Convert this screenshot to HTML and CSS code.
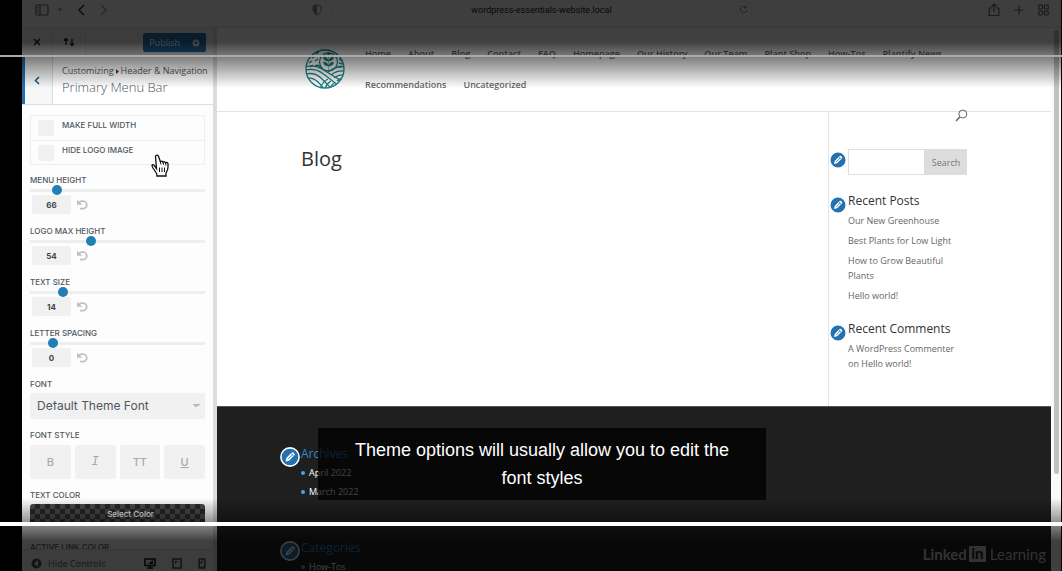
FILE: index.html
```html
<!DOCTYPE html>
<html lang="en">
<head>
<meta charset="utf-8">
<title>Primary Menu Bar</title>
<link rel="stylesheet" href="styles.css">
</head>
<body>
<svg class="defs" aria-hidden="true">
  <symbol id="pencil" viewBox="0 0 18 18"><circle cx="9" cy="9" r="8.2" fill="#2271b1" stroke="#fff" stroke-width="1.4"/><path d="M5 13l.7-3.1 4.9-4.9q.7-.6 1.4 0l1 1q.6.7 0 1.4l-4.900 4.900z" fill="#fff"/><path d="M7.2 11l4-4M10 5.8l2.2 2.2" stroke="#2271b1" stroke-width=".8"/></symbol>
  <symbol id="undo" viewBox="0 0 12 12"><path d="M3 3.400Q5 1.800 7.200 2.200A3.700 3.700 0 0 1 6.800 9.600H4" fill="none" stroke="#c0c0c0" stroke-width="1.800"/><path d="M1 .8v5h5.400z" fill="#c0c0c0"/></symbol>
</svg>
<div class="stage">
  <header class="toolbar">
    <div class="tools">
      <svg width="14" height="12" viewBox="0 0 14 12"><rect x="1" y="1" width="12" height="10" rx="1.5" class="ln"/><path d="M5 1v10M2.4 3.5h1.2M2.4 5.5h1.2M2.4 7.5h1.2" class="ln"/></svg>
      <svg class="caret" width="6" height="4" viewBox="0 0 6 4"><path d="M1 .5h4L3 3.5z" fill="#888"/></svg>
      <svg class="prev" width="8" height="12" viewBox="0 0 8 12"><path d="M7 1L2 6l5 5" class="ln dark"/></svg>
      <svg class="next" width="8" height="12" viewBox="0 0 8 12"><path d="M1 1l5 5-5 5" class="ln pale"/></svg>
      <svg class="shield" width="10" height="12" viewBox="0 0 10 12"><path d="M5 .8L9 2v4.500q-1 3.500-4 4.700-3-1.200-4-4.700V2z" fill="none" stroke="#888"/><path d="M5 .8v10.400q-3-1.200-4-4.700V2z" fill="#888"/></svg>
    </div>
    <div class="url"><span>wordpress-essentials-website.local</span>
      <svg width="9" height="9" viewBox="0 0 9 9"><path d="M7 2.500A3.200 3.200 0 1 0 7.700 5M7.200.5v2.300H5" fill="none" stroke="#888"/></svg></div>
    <div class="tools end">
      <svg width="12" height="14" viewBox="0 0 12 14"><path d="M4 5H1.200v7.500h9.600V5H8M6 9V1M3.500 3.500L6 1l2.500 2.500" class="ln"/></svg>
      <svg width="10" height="10" viewBox="0 0 10 10"><path d="M5 .5v9M.5 5h9" class="ln"/></svg>
      <svg width="11" height="12" viewBox="0 0 11 12"><g class="ln"><rect x=".8" y="1" width="3.700" height="4" rx=".8"/><rect x="6.500" y="1" width="3.700" height="4" rx=".8"/><rect x=".8" y="7" width="3.700" height="4" rx=".8"/><rect x="6.500" y="7" width="3.700" height="4" rx=".8"/></g></svg>
    </div>
  </header>

  <div class="window">
    <aside class="customizer">
      <div class="actions">
        <button class="cell" aria-label="Close"><svg width="8" height="8" viewBox="0 0 8 8"><path d="M1 1l6 6M7 1L1 7" stroke="#222" stroke-width="1.600"/></svg></button>
        <button class="cell" aria-label="Reorder"><svg width="12" height="10" viewBox="0 0 12 10"><path d="M3 8V1.500M1 3.500l2-2 2 2M9 2v6.500M7 6.500l2 2 2-2" fill="none" stroke="#222" stroke-width="1.400"/></svg></button>
        <div class="publish"><button>Publish</button><button class="gear" aria-label="Settings"><svg width="8" height="8" viewBox="0 0 8 8"><circle cx="4" cy="4" r="2.200" fill="none" stroke="#fff" stroke-width="1.500"/><path d="M4 0v1.500M4 6.500V8M0 4h1.500M6.500 4H8M1.200 1.200l1 1M5.800 5.800l1 1M6.800 1.200l-1 1M1.200 6.800l1-1" stroke="#fff"/></svg></button></div>
      </div>
      <div class="title">
        <button class="back" aria-label="Back"><svg width="6" height="9" viewBox="0 0 6 9"><path d="M5 1L1.500 4.500 5 8" fill="none" stroke="#0b5a8c" stroke-width="1.500"/></svg></button>
        <div class="heading"><p><span>Customizing</span><svg width="3" height="5" viewBox="0 0 3 5"><path d="M0 0l3 2.500L0 5z" fill="#444"/></svg><span>Header &amp; Navigation</span></p><h1>Primary Menu Bar</h1></div>
      </div>
      <div class="panel">
        <div class="options">
          <label><input type="checkbox">MAKE FULL WIDTH</label>
          <label><input type="checkbox">HIDE LOGO IMAGE</label>
        </div>
        <div class="field"><label for="mh">MENU HEIGHT</label><input id="mh" type="range" min="0" max="165" value="22"><div class="value"><input type="text" value="66" aria-label="Menu height value"><button aria-label="Reset"><svg width="12" height="12"><use href="#undo"/></svg></button></div></div>
        <div class="field"><label for="lh">LOGO MAX HEIGHT</label><input id="lh" type="range" min="0" max="165" value="56"><div class="value"><input type="text" value="54" aria-label="Logo max height value"><button aria-label="Reset"><svg width="12" height="12"><use href="#undo"/></svg></button></div></div>
        <div class="field"><label for="ts">TEXT SIZE</label><input id="ts" type="range" min="0" max="165" value="28"><div class="value"><input type="text" value="14" aria-label="Text size value"><button aria-label="Reset"><svg width="12" height="12"><use href="#undo"/></svg></button></div></div>
        <div class="field"><label for="ls">LETTER SPACING</label><input id="ls" type="range" min="0" max="165" value="18"><div class="value"><input type="text" value="0" aria-label="Letter spacing value"><button aria-label="Reset"><svg width="12" height="12"><use href="#undo"/></svg></button></div></div>
        <label class="name" for="font">FONT</label>
        <select id="font"><option>Default Theme Font</option></select>
        <p class="name">FONT STYLE</p>
        <div class="styles"><button>B</button><button><i>I</i></button><button>TT</button><button><u>U</u></button></div>
        <p class="name">TEXT COLOR</p>
        <button class="color">Select Color</button>
        <p class="name">ACTIVE LINK COLOR</p>
      </div>
      <footer class="devices">
        <button class="hide"><svg width="11" height="11" viewBox="0 0 11 11"><circle cx="5.500" cy="5.500" r="5" fill="#555"/><path d="M7 2.500v6l-4-3z" fill="#eee"/></svg>Hide Controls</button>
        <div class="sizes">
          <button aria-label="Desktop"><svg width="12" height="11" viewBox="0 0 12 11"><path d="M1 1h10v6.500H1zM6 7v3M3 10h6" fill="none" stroke="#111" stroke-width="1.600"/><path d="M4 6l5-4v4z" fill="#111"/></svg></button>
          <button aria-label="Tablet"><svg width="10" height="11" viewBox="0 0 10 11"><rect x="1" y="1" width="8" height="9" fill="none" stroke="#444" stroke-width="1.500"/><path d="M3 6V3h3z" fill="#444"/></svg></button>
          <button aria-label="Phone"><svg width="8" height="11" viewBox="0 0 8 11"><rect x="1.200" y="1" width="5.600" height="9" rx=".5" fill="none" stroke="#444" stroke-width="1.500"/><path d="M3 6V3h2zM2 8.500h4" fill="#444" stroke="#444" stroke-width=".5"/></svg></button>
        </div>
      </footer>
    </aside>

    <main class="site">
      <header class="site-header">
        <svg class="logo" width="40" height="40" viewBox="0 0 40 40" fill="none" stroke="#1c8084" stroke-width="1.300">
          <defs><clipPath id="disc"><circle cx="20" cy="20" r="19"/></clipPath></defs>
          <circle cx="20" cy="20" r="19"/>
          <g clip-path="url(#disc)">
            <path d="M0 18q9-3 17 2t23 14M0 21q10-2 17 3t17 13M0 25q10-2 16 4t11 11M0 29q8-1 13 4t7 8M0 33q6 0 9 3t4 5"/>
            <path d="M40 18q-10-1-17 5M40 22q-8-1-14 4M40 26q-6-1-11 3M40 30q-5-1-8 2M15 40q2-7 8-10M20 40q1-5 6-8M25 40q1-4 4-6M10 18q1-4 7 1"/>
            <circle cx="23.500" cy="13" r="9"/><path d="M23.500 22V7M23.500 12q-5 0-5-4 4 0 5 4zM23.500 12q5 0 5-4-4 0-5 4zM23.500 17q-5 0-5-4 4 0 5 4zM23.500 17q5 0 5-4-4 0-5 4zM23.500 8q-2-2 0-5 2 3 0 5z" fill="#1c8084" stroke-width=".5"/>
            <path d="M4 14l3-2M7 9l3-2M11 5l3-2M10 12l3-2M5 18l3-2M12 8l2-1M32 5l2 2M34 10l3 2M34 14l4 1M33 18l4-1" />
          </g>
        </svg>
        <nav><a href="#">Home</a><a href="#">About</a><a href="#">Blog</a><a href="#">Contact</a><a href="#">FAQ</a><a href="#">Homepage</a><a href="#">Our History</a><a href="#">Our Team</a><a href="#">Plant Shop</a><a href="#">How-Tos</a><a href="#">Plantify News</a><a href="#">Recommendations</a><a href="#">Uncategorized</a></nav>
      </header>
      <div class="content">
        <h2>Blog</h2>
        <aside class="widgets">
          <svg class="glass" width="13" height="13" viewBox="0 0 13 13"><circle cx="7.800" cy="5" r="4" fill="none" stroke="#666"/><path d="M4.800 8L1 12" stroke="#666" stroke-width="1.500"/></svg>
          <section><svg class="pin" width="18" height="18"><use href="#pencil"/></svg><form><input type="search" aria-label="Search for"><button type="button">Search</button></form></section>
          <section><svg class="pin" width="18" height="18"><use href="#pencil"/></svg><h3>Recent Posts</h3>
            <ul><li><a href="#">Our New Greenhouse</a></li><li><a href="#">Best Plants for Low Light</a></li><li><a href="#">How to Grow Beautiful Plants</a></li><li><a href="#">Hello world!</a></li></ul></section>
          <section><svg class="pin" width="18" height="18"><use href="#pencil"/></svg><h3>Recent Comments</h3>
            <ul><li><a href="#">A WordPress Commenter</a> on <a href="#">Hello world!</a></li></ul></section>
        </aside>
      </div>
      <footer class="site-footer">
        <section><svg class="pin" width="20" height="20"><use href="#pencil"/></svg><h3>Archives</h3><ul><li>April 2022</li><li>March 2022</li></ul></section>
        <section><svg class="pin" width="20" height="20"><use href="#pencil"/></svg><h3>Categories</h3><ul><li>How-Tos</li></ul></section>
      </footer>
    </main>
    <div class="scroll"><div class="thumb"></div></div>
  </div>
</div>

<svg class="cursor" width="18" height="23" viewBox="0 0 18 23"><path d="M5.500 14.500L3 11.200Q1.500 10 1 11.300q0 1 1 2.700l3 4.500q1 1.500 1 3.500h9v-3q2-3 2-6V9.500q-1-1.800-2.300-.5Q13.500 7 12 8.200 11 6.300 9.300 7.500L7.500 2.300Q6.500.5 5 1.500 4 2.300 4.600 3.700z" fill="#fff" stroke="#111" stroke-width="1.300"/><path d="M9.300 7.500l.7 3M12 8.200l.5 2.500M14.700 9l.2 2.500M8.500 13.500v4.500M11 13.500v4.500M13.500 13.500v4.500" stroke="#111" fill="none"/></svg>
<p class="caption">Theme options will usually allow you to edit the font styles</p>
<div class="shade top"></div>
<div class="shade bottom"></div>
<div class="rule"></div>
<div class="progress"></div>
<div class="brand"><b>Linked</b><span class="in">in</span><span>Learning</span></div>
</body>
</html>
```

FILE: styles.css
```css
* { box-sizing: border-box; margin: 0; padding: 0; }
body { background: #000; font-family: "Open Sans", sans-serif; height: 100vh; overflow: hidden; position: relative; }
button, input, select { font: inherit; color: inherit; border: 0; background: none; border-radius: 0; }
button { display: flex; align-items: center; justify-content: center; }
a { color: inherit; text-decoration: none; }
ul { list-style: none; }
h1, h2, h3 { font-weight: 400; }
svg { flex: none; }
.defs { position: absolute; width: 0; height: 0; }

.stage { height: 100vh; margin: 0 1px 0 22px; display: flex; flex-direction: column; background: #fff; overflow: hidden; }

/* Browser chrome */
.toolbar { flex: none; height: 28px; padding-bottom: 8px; display: grid; grid-template-columns: 1fr 420px 1fr; align-items: center; background: #f6f6f6; border-bottom: 1px solid #ddd; }
.tools { display: flex; align-items: center; padding-left: 13px; }
.tools.end { justify-content: flex-end; gap: 14px; padding: 0 12px 0 0; }
.ln { fill: none; stroke: #666; stroke-width: 1.2; }
.ln.dark { stroke: #333; stroke-width: 1.5; }
.ln.pale { stroke: #aaa; stroke-width: 1.5; }
.caret { margin-left: 8px; }
.prev { margin-left: 14px; }
.next { margin-left: 15px; }
.shield { margin: 0 10px 0 auto; }
.url { display: flex; align-items: center; height: 17px; border: 1px solid #e9e9e9; border-radius: 4px; font: 9px Roboto, sans-serif; color: #222; padding: 0 3px 0 12px; }
.url span { flex: 1; text-align: center; }

.window { flex: 1; min-height: 0; display: flex; }

/* Customizer sidebar */
.customizer { flex: none; width: 195px; display: flex; flex-direction: column; border-right: 4px solid #dcdcdc; background: #fdfdfd; color: #50575e; }
.actions { flex: none; display: flex; height: 28px; background: #eee; border-bottom: 1px solid #ddd; }
.cell { width: 31px; border-right: 1px solid #ddd; }
.cell + .cell { width: 33px; }
.publish { display: flex; margin: 5px 7px 3px auto; background: #2271b1; border-radius: 2px; color: #fff; font-size: 9px; }
.publish button { padding: 0 6px; }
.title { flex: none; display: flex; height: 49px; background: #fff; border-bottom: 1px solid #ddd; }
.back { width: 31px; padding-right: 4px; border-left: 3px solid #2271b1; border-right: 1px solid #ddd; background: #f6f7f7; }
.heading { padding: 8px 0 0 9px; white-space: nowrap; }
.heading p { display: flex; align-items: center; gap: 2px; font-size: 9px; line-height: 14px; }
.heading h1 { font-size: 13px; line-height: 19px; font-weight: 300; }
.panel { flex: 1; min-height: 0; overflow: hidden; padding: 10px 8px 0; font-family: Inter, sans-serif; font-size: 8px; font-weight: 500; line-height: 10px; }
.options { border: 1px solid #eee; margin-bottom: 10px; }
.options label { display: flex; gap: 8px; height: 24px; padding: 4px 0 0 7px; }
.options label + label { border-top: 1px solid #eee; }
.options input { appearance: none; width: 16px; height: 16px; background: #f1f1f1; border-radius: 2px; }
.field { height: 51px; }
.field > label, .name { display: block; }
.field > input { appearance: none; display: block; width: 100%; height: 10px; background: linear-gradient(#eee, #eee) center / 100% 3px no-repeat; }
.field > input::-webkit-slider-thumb { appearance: none; width: 10px; height: 10px; border-radius: 50%; background: #2080b4; }
.value { display: flex; align-items: center; gap: 5px; padding-left: 2px; }
.value input { width: 39px; height: 19px; background: #f1f1f1; border-radius: 2px; text-align: center; font-weight: 700; color: #444; }
select { appearance: none; display: block; width: 100%; height: 26px; margin: 4px 0 11px; padding: 0 7px; border-radius: 2px; font-size: 12px; font-weight: 400; background: conic-gradient(from -45deg at 50% 100%, #bbb 90deg, #f1f1f1 0) right 5px center / 8px 4px no-repeat, #f1f1f1; }
.styles { display: grid; grid-template-columns: repeat(4, 1fr); gap: 4px; margin: 5px 0 11px; }
.styles button { height: 34px; background: #f1f1f1; border-radius: 2px; color: #aaa; font-size: 11px; }
.styles i { font-family: "Liberation Mono", monospace; font-size: 13px; }
.color { width: 100%; height: 20px; margin: 4px 0 18px; padding-left: 26px; border-radius: 3px 3px 0 0; color: #fff; background: repeating-conic-gradient(#292929 0 25%, #4a4a4a 0 50%) 0 0 / 10px 10px; }
.devices { flex: none; height: 22px; display: flex; align-items: center; justify-content: space-between; padding: 6px 7px 0 9px; background: #eee; border-top: 1px solid #ddd; font-size: 9px; }
.hide { gap: 6px; }
.sizes { display: flex; gap: 16px; }

/* Previewed site */
.site { flex: 1; min-width: 0; display: flex; flex-direction: column; color: #666; }
.site-header { flex: none; display: flex; align-items: center; gap: 20px; height: 84px; padding: 0 100px 2px 88px; border-bottom: 1px solid #e4e4e4; }
nav { display: flex; flex-wrap: wrap; column-gap: 17px; font-size: 9px; font-weight: 600; line-height: 31px; }
.content { flex: none; height: 294px; display: flex; justify-content: space-between; padding-left: 84px; }
h2 { padding-top: 33px; font-size: 20px; line-height: 28px; color: #333; }
.widgets { position: relative; width: 223px; padding: 37px 84px 0 19px; border-left: 1px solid #e4e4e4; font-size: 9px; line-height: 15px; }
.widgets section { position: relative; margin-bottom: 17px; }
.glass { position: absolute; right: 83px; top: -3px; }
.pin { position: absolute; left: -19px; top: 2px; }
h3, .pin + h3 { font-size: 12px; line-height: 18px; color: #333; white-space: nowrap; }
.widgets section + section .pin { top: 4px; }
.widgets form { display: flex; height: 26px; }
.widgets form input { flex: 1; min-width: 0; border: 1px solid #ddd; }
.widgets form button { width: 42px; background: #ddd; color: #777; }
.widgets li { margin-top: 5px; }
.widgets h3 + ul li:first-child { margin-top: 3px; }
.widgets ul { margin-right: 8px; }
.site-footer { flex: 1; min-height: 0; overflow: hidden; padding: 38px 84px 0; background: #1f1f1f; border-top: 1px solid #555; color: #fff; font-size: 9px; line-height: 15px; }
.site-footer section { position: relative; min-height: 94px; }
.site-footer .pin { left: -21px; }
.site-footer .pin + h3 { color: #2e86d0; }
.site-footer li { display: flex; align-items: center; gap: 4px; margin-top: 4px; }
.site-footer li:first-child { margin-top: 2px; }
.site-footer li::before { content: ""; width: 4px; height: 4px; border-radius: 50%; background: #4ba3e8; }
.scroll { flex: none; width: 10px; padding: 2px 2px 0 3px; background: #fafafa; }
.thumb { height: 82%; border-radius: 3px; background: #c1c1c1; }

/* Player overlays */
.cursor { position: absolute; left: 151px; top: 154px; }
.caption { position: absolute; left: 22px; right: 0; bottom: 71px; width: 448px; margin: 0 auto; padding: 8px 32px; background: rgba(0, 0, 0, .75); color: #fff; font: 18px/28px "Liberation Sans", sans-serif; text-align: center; }
.shade { position: absolute; left: 0; right: 0; pointer-events: none; }
.shade.top { top: 0; height: 88px; background: linear-gradient(rgba(0, 0, 0, .75) 42px, transparent); }
.shade.bottom { bottom: 0; height: 73px; background: linear-gradient(transparent, rgba(0, 0, 0, .75) 43px); }
.rule { position: absolute; left: 0; right: 0; top: 55px; height: 2px; background: #aaa; }
.progress { position: absolute; left: 0; right: 0; bottom: 45px; height: 4px; background: #fff; }
.brand { position: absolute; right: 16px; bottom: 8px; display: flex; align-items: center; gap: 2px; font: 15px/18px Lato, sans-serif; color: #333; }
.brand .in { width: 17px; height: 16px; border-radius: 1px; background: #333; color: #0a0a0a; font-weight: 900; line-height: 15px; text-align: center; }
.brand span:last-child { margin-left: 2px; }
```
